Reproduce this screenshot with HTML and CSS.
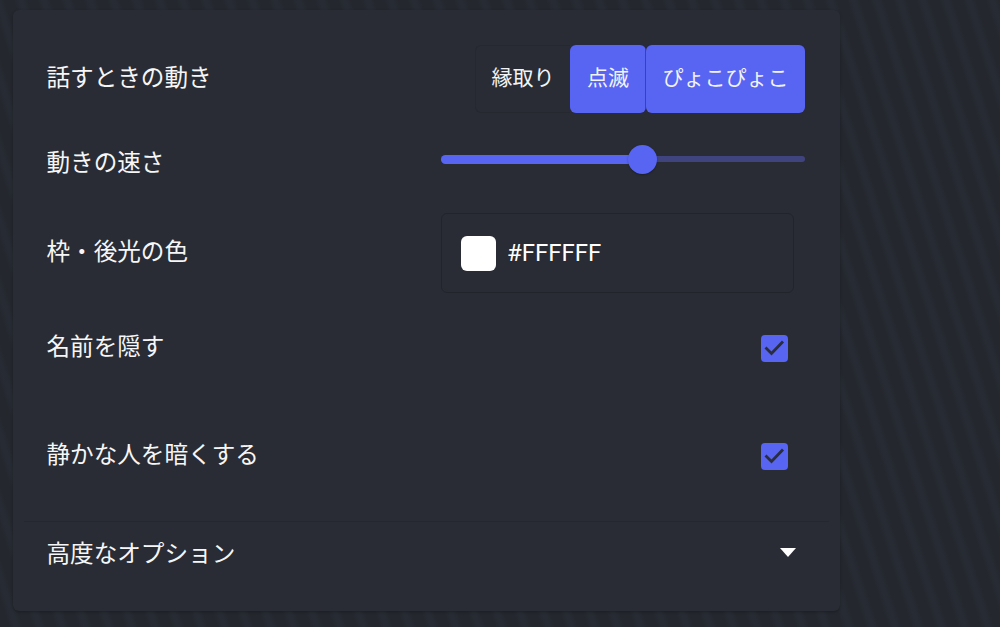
FILE: index.html
```html
<!DOCTYPE html>
<html lang="ja">
<head>
<meta charset="utf-8">
<title>設定</title>
<link rel="stylesheet" href="styles.css">
</head>
<body>
<main class="panel">
  <div class="row row-motion">
    <span class="label label-up">話すときの動き</span>
    <div class="toggle-group">
      <button class="toggle">縁取り</button>
      <button class="toggle toggle-on toggle-mid">点滅</button>
      <button class="toggle toggle-on toggle-end">ぴょこぴょこ</button>
    </div>
  </div>
  <div class="row row-speed">
    <span class="label label-down">動きの速さ</span>
    <div class="slider">
      <div class="slider-fill" style="width:55.2%"><span class="slider-thumb"></span></div>
    </div>
  </div>
  <div class="row row-color">
    <span class="label label-up">枠・後光の色</span>
    <div class="color-input">
      <span class="swatch"></span>
      <span class="color-value">#FFFFFF</span>
    </div>
  </div>
  <div class="row row-check">
    <span class="label label-up">名前を隠す</span>
    <span class="checkbox"><svg viewBox="0 0 27 27" width="27" height="27"><path d="M4.5 12.5l6 6 11.5-12" fill="none" stroke="#2a2d3a" stroke-width="2.8"/></svg></span>
  </div>
  <div class="row row-check">
    <span class="label label-up">静かな人を暗くする</span>
    <span class="checkbox"><svg viewBox="0 0 27 27" width="27" height="27"><path d="M4.5 12.5l6 6 11.5-12" fill="none" stroke="#2a2d3a" stroke-width="2.8"/></svg></span>
  </div>
  <div class="advanced">
    <span class="label label-adv">高度なオプション</span>
    <svg class="caret" viewBox="0 0 16 9" width="16" height="9"><path d="M0 0h16L8 9z" fill="#fff"/></svg>
  </div>
</main>
</body>
</html>
```
FILE: styles.css
```css
* { box-sizing: border-box; }
html, body { height: 100%; }
body {
  margin: 0;
  padding: 10px 160px 16px 13px;
  overflow: hidden;
  background-color: #25282f;
  background-image: repeating-linear-gradient(72deg, #24272e 0, #24272e 9px, #272b33 14px, #272b33 17px, #24272e 22px);
  font-family: "Noto Sans CJK JP", "Noto Sans", sans-serif;
  color: #f6f6f7;
}
.panel {
  height: 601px;
  padding: 35px 35px 0 34px;
  display: flex;
  flex-direction: column;
  background: #292c34;
  border-radius: 6px;
  box-shadow: 0 1px 3px rgba(0, 0, 0, 0.25);
}
.row { display: flex; justify-content: space-between; align-items: center; }
.row-motion { height: 68px; }
.row-speed { height: 68px; margin-top: 12px; }
.row-color { height: 80px; margin-top: 20px; }
.row-check { height: 96px; margin-top: 12px; padding-right: 17px; }
.row-color + .row-check { margin-top: 7px; }
.label { margin-left: -0.5px; font-size: 23.6px; line-height: 32px; font-weight: 400; white-space: nowrap; }
.label-up { margin-bottom: 6px; }
.label-down { margin-top: 3px; }
.label-adv { margin-bottom: 5px; }
.toggle-group { display: flex; height: 68px; width: 330px; }
.toggle {
  padding: 0 0 6px;
  font: inherit;
  font-size: 21px;
  color: #f2f3f5;
  background: transparent;
  border: 1px solid #262830;
  border-right: 0;
  border-radius: 6px 0 0 6px;
  width: 95px;
}
.toggle-on { background: #5865f2; border: 0; border-radius: 6px; box-shadow: 0 0 0 1px rgba(40, 42, 80, 0.55); }
.toggle-mid { width: 76px; }
.toggle-end { width: 159px; }
.slider { position: relative; width: 364px; height: 6px; background: #40447e; border-radius: 3px; }
.slider-fill { position: relative; height: 9px; margin-top: -1.5px; background: #5865f2; border-radius: 5px 0 0 5px; }
.slider-thumb {
  position: absolute;
  right: -15px;
  top: -10px;
  width: 29px;
  height: 29px;
  border-radius: 50%;
  background: #5865f2;
  box-shadow: 0 1px 2px rgba(0, 0, 0, 0.3);
}
.color-input {
  display: flex;
  align-items: center;
  gap: 11px;
  width: 353px;
  height: 80px;
  margin-right: 11px;
  padding-left: 19px;
  border: 1px solid #22242b;
  border-radius: 6px;
}
.swatch { width: 35px; height: 35px; background: #fff; border-radius: 6px; }
.color-value { font-family: Roboto, sans-serif; font-size: 24px; color: #fff; }
.checkbox { width: 27px; height: 27px; background: #5865f2; border-radius: 4px; }
.checkbox svg { display: block; }
.advanced {
  display: flex;
  justify-content: space-between;
  align-items: center;
  height: 66px;
  margin: 17px -24px 0 -23px;
  padding: 0 33px 0 23px;
  border-top: 1px solid #25272f;
}
.caret { margin-bottom: 5px; }
```
